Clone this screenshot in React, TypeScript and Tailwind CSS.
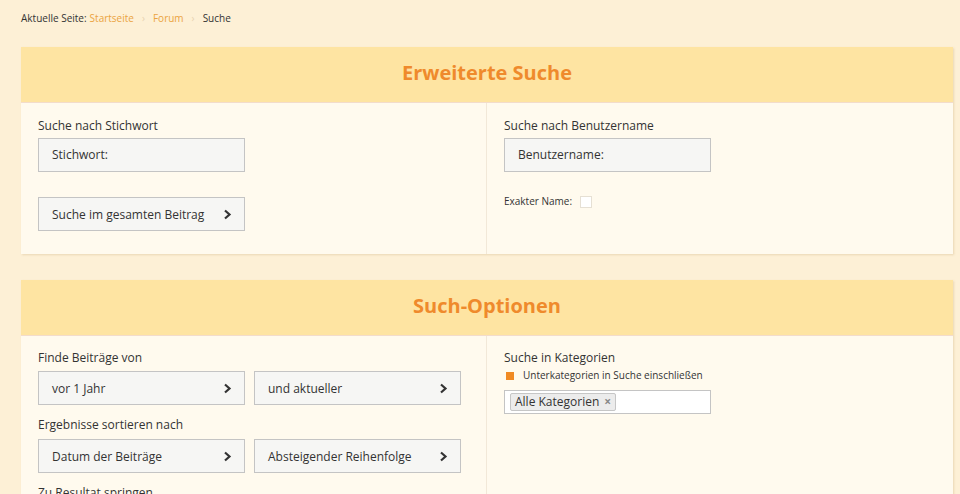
import React from 'react';

const ChevronRight: React.FC = () => (
  <svg width="9" height="11" viewBox="0 0 9 11" className="shrink-0">
    <path d="M2 1.5 L6.5 5.5 L2 9.5" fill="none" stroke="#333" strokeWidth="2.2" />
  </svg>
);

const SelectBox: React.FC<{ label: string }> = ({ label }) => (
  <div className="flex h-[34px] w-[207px] items-center justify-between border border-[#c4c4c4] bg-[#f6f6f4] pl-[13px] pr-[12px] text-[12px] text-[#333]">
    <span className="mt-[2px]">{label}</span>
    <ChevronRight />
  </div>
);

const TextBox: React.FC<{ placeholder: string }> = ({ placeholder }) => (
  <div className="flex h-[34px] w-[207px] items-center border border-[#c4c4c4] bg-[#f6f6f4] pl-[13px] text-[12px] text-[#333]">
    {placeholder}
  </div>
);

const Panel: React.FC<{ title: string; children: React.ReactNode }> = ({ title, children }) => (
  <section className="shadow-[1px_1px_2px_rgba(200,170,120,0.35)]">
    <div className="flex h-[55px] items-center justify-center bg-[#fee4a2] pb-[4px]">
      <h2 className="text-[20px] font-bold text-[#ef8a2c]">{title}</h2>
    </div>
    <div className="grid grid-cols-2 border-t border-[#f3dccb] bg-[#fffaee]">{children}</div>
  </section>
);

const App: React.FC = () => {
  return (
    <div
      className="h-[494px] overflow-hidden bg-[#fdf0d6] px-[21px] text-[#333]"
      style={{ fontFamily: '"Open Sans", "Noto Sans", sans-serif' }}
    >
      {/* breadcrumb */}
      <div className="flex h-[36px] items-center gap-[3px] text-[10px]">
        <span>Aktuelle Seite:</span>
        <span className="text-[#eba43f]">Startseite</span>
        <span className="mx-[5px] text-[#e8d2b0]">›</span>
        <span className="text-[#eba43f]">Forum</span>
        <span className="mx-[5px] text-[#e8d2b0]">›</span>
        <span>Suche</span>
      </div>

      <div className="mt-[11px] flex w-[932px] flex-col gap-[26px]">
        <Panel title="Erweiterte Suche">
          <div className="border-r border-[#f2e8d8] px-[17px] pb-[23px] pt-[14px]">
            <div className="text-[12px] leading-[18px]">Suche nach Stichwort</div>
            <div className="mt-[3px]">
              <TextBox placeholder="Stichwort:" />
            </div>
            <div className="mt-[25px]">
              <SelectBox label="Suche im gesamten Beitrag" />
            </div>
          </div>
          <div className="px-[17px] pt-[14px]">
            <div className="text-[12px] leading-[18px]">Suche nach Benutzername</div>
            <div className="mt-[3px]">
              <TextBox placeholder="Benutzername:" />
            </div>
            <div className="mt-[22px] flex items-center gap-[8px] text-[10px]">
              <span>Exakter Name:</span>
              <span className="h-[12px] w-[12px] border border-[#e6e0d4] bg-white" />
            </div>
          </div>
        </Panel>

        <Panel title="Such-Optionen">
          <div className="border-r border-[#f2e8d8] px-[17px] pb-[30px] pt-[13px]">
            <div className="text-[12px] leading-[18px]">Finde Beiträge von</div>
            <div className="mt-[4px] flex gap-[9px]">
              <SelectBox label="vor 1 Jahr" />
              <SelectBox label="und aktueller" />
            </div>
            <div className="mt-[11px] text-[12px] leading-[18px]">Ergebnisse sortieren nach</div>
            <div className="mt-[5px] flex gap-[9px]">
              <SelectBox label="Datum der Beiträge" />
              <SelectBox label="Absteigender Reihenfolge" />
            </div>
            <div className="mt-[11px] text-[12px] leading-[18px]">Zu Resultat springen</div>
          </div>
          <div className="px-[17px] pt-[13px]">
            <div className="text-[12px] leading-[18px]">Suche in Kategorien</div>
            <div className="mt-[1px] flex items-center gap-[9px] text-[10px]">
              <span className="ml-[2px] h-[8px] w-[8px] bg-[#f08a24]" />
              <span>Unterkategorien in Suche einschließen</span>
            </div>
            <div className="mt-[7px] flex h-[24px] w-[207px] items-center border border-[#c4c4c4] bg-white pl-[5px]">
              <span className="flex h-[18px] items-center gap-[5px] rounded-[2px] border border-[#c6c6c6] bg-[#ececec] px-[4px] text-[12px]">
                Alle Kategorien
                <span className="text-[12px] font-bold text-[#888]">×</span>
              </span>
            </div>
          </div>
        </Panel>
      </div>
    </div>
  );
};

export default App;
